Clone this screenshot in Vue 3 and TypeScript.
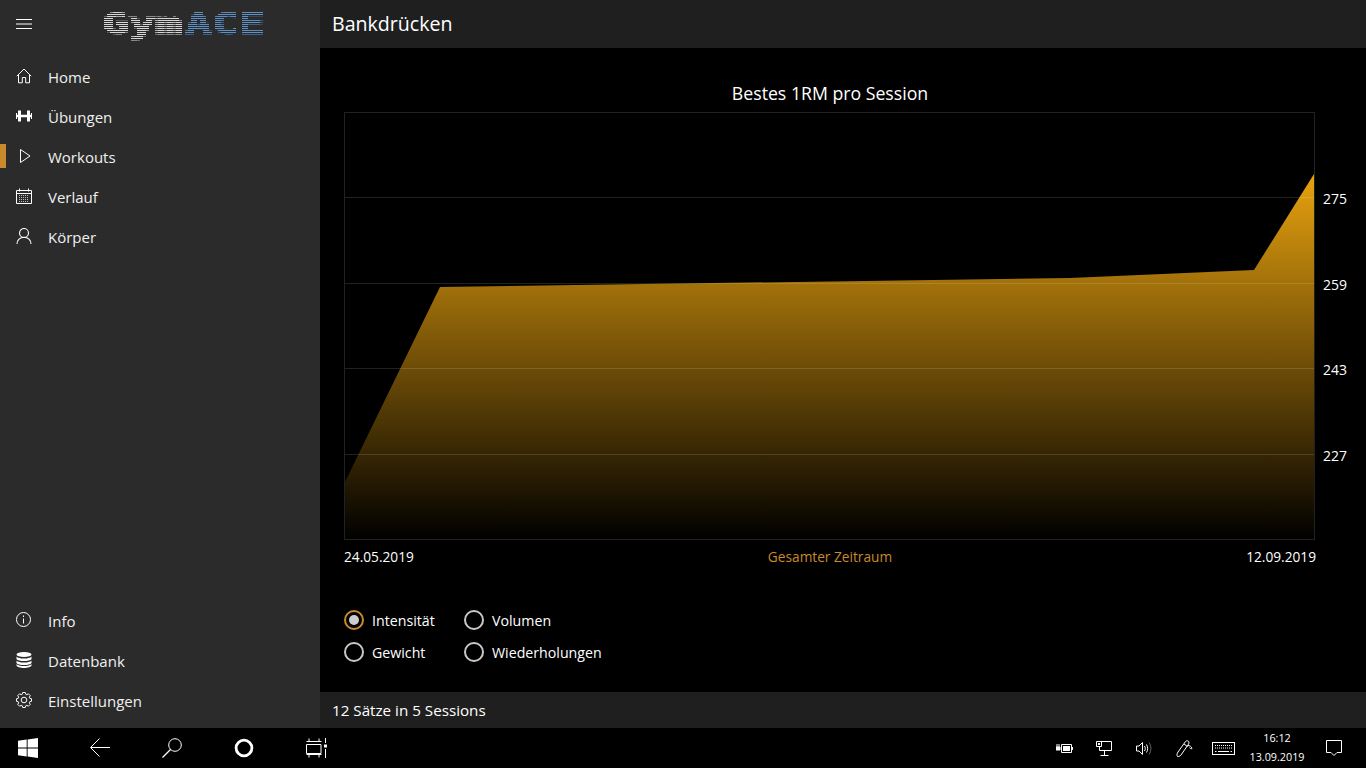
<script setup lang="ts">
const topNav = [
  { label: 'Home', icon: 'home' },
  { label: 'Übungen', icon: 'dumbbell' },
  { label: 'Workouts', icon: 'play', active: true },
  { label: 'Verlauf', icon: 'calendar' },
  { label: 'Körper', icon: 'person' }
]

const bottomNav = [
  { label: 'Info', icon: 'info' },
  { label: 'Datenbank', icon: 'database' },
  { label: 'Einstellungen', icon: 'gear' }
]

const gridLines = [
  { y: 197.5, label: '275' },
  { y: 283.5, label: '259' },
  { y: 368.5, label: '243' },
  { y: 454.5, label: '227' }
]

const areaPoints = '344,484 440,287 1070,278 1254,270 1314,174 1314,540 344,540'

const radios = [
  { label: 'Intensität', checked: true },
  { label: 'Volumen' },
  { label: 'Gewicht' },
  { label: 'Wiederholungen' }
]

// outline of the settings cog, 8 teeth
function gearPath(): string {
  const pts: string[] = []
  for (let i = 0; i < 8; i++) {
    const a = (i * Math.PI) / 4
    for (const [r, d] of [[6, -0.3], [7.6, -0.17], [7.6, 0.17], [6, 0.3]]) {
      pts.push(`${(8 + r * Math.sin(a + d)).toFixed(2)} ${(8 - r * Math.cos(a + d)).toFixed(2)}`)
    }
  }
  return 'M' + pts.join('L') + 'Z'
}
const gear = gearPath()
</script>

<template>
  <div class="screen">
    <div class="app">
      <aside class="sidebar">
        <div class="side-top">
          <svg class="burger" width="16" height="10" viewBox="0 0 16 10">
            <path d="M0 .5h16M0 5h16M0 9.500h16" stroke="#fff" fill="none" />
          </svg>
          <svg class="logo" width="166" height="40" viewBox="0 0 166 40">
            <defs>
              <!-- samples the text on a small grid so the letters turn into stepped line rows -->
              <filter id="blocks" x="0" y="0" width="166" height="40" filterUnits="userSpaceOnUse" primitiveUnits="userSpaceOnUse" color-interpolation-filters="sRGB">
                <feFlood x="1" y="0" width="1" height="1" flood-color="#fff" />
                <feComposite width="3" height="2" />
                <feTile result="grid" />
                <feComposite in="SourceGraphic" in2="grid" operator="in" />
                <feMorphology operator="dilate" radius="1 0" />
              </filter>
            </defs>
            <g filter="url(#blocks)">
              <text class="logo-text" x="1" y="28" textLength="80" lengthAdjust="spacingAndGlyphs" fill="#d8d8d8" stroke="#d8d8d8">Gym</text>
              <text class="logo-text" x="84" y="28" textLength="80" lengthAdjust="spacingAndGlyphs" fill="#5b90c8" stroke="#5b90c8">ACE</text>
            </g>
          </svg>
        </div>

        <nav class="nav">
          <div v-for="item in topNav" :key="item.label" class="nav-item" :class="{ active: item.active }">
            <span class="nav-icon">
              <svg v-if="item.icon === 'home'" width="16" height="16" viewBox="0 0 16 16" fill="none" stroke="#fff">
                <path d="M.8 8.200 8 1l7.200 7.200M2.500 6.500v8.300h3.800V9.500h3.400v5.300h3.800V6.500" />
              </svg>
              <svg v-else-if="item.icon === 'dumbbell'" width="16" height="12" viewBox="0 0 16 12" fill="#fff">
                <path d="M0 3h1v6H0zM2 .5h3v11H2zM5 4.700h6v2.600H5zM11 .5h3v11h-3zM15 3h1v6h-1zM1 4.700h1v2.600H1zM14 4.700h1v2.600h-1z" />
              </svg>
              <svg v-else-if="item.icon === 'play'" width="16" height="16" viewBox="0 0 16 16" fill="none" stroke="#fff">
                <path d="M4.500 1.500v13l9.500-6.500z" />
              </svg>
              <svg v-else-if="item.icon === 'calendar'" width="16" height="16" viewBox="0 0 16 16" fill="none" stroke="#fff">
                <path d="M.5 2.500h15v13H.5zM.5 5.500h15M3.500 .5v3M12.500 .5v3" />
                <path d="M3 7.500h10M3 9.500h10M3 11.500h10M3 13.500h10" stroke-dasharray="1 1" stroke="#bbb" />
              </svg>
              <svg v-else-if="item.icon === 'person'" width="16" height="16" viewBox="0 0 16 16" fill="none" stroke="#fff" stroke-width="1.100">
                <circle cx="8" cy="5" r="4.500" />
                <path d="M1 16c0-4 3-6.800 7-6.800s7 2.800 7 6.800" />
              </svg>
            </span>
            <span class="nav-label">{{ item.label }}</span>
          </div>
        </nav>

        <nav class="nav nav-bottom">
          <div v-for="item in bottomNav" :key="item.label" class="nav-item">
            <span class="nav-icon">
              <svg v-if="item.icon === 'info'" width="16" height="16" viewBox="0 0 16 16" fill="none" stroke="#fff">
                <circle cx="7.500" cy="7.500" r="7" />
                <path d="M7.500 6.500v5M7.500 3.500v1.500" />
              </svg>
              <svg v-else-if="item.icon === 'database'" width="16" height="16" viewBox="0 0 16 16" fill="#fff">
                <ellipse cx="8" cy="2.500" rx="7.500" ry="2.500" />
                <path d="M.5 4.500c1 1.500 4 2 7.500 2s6.500-.5 7.500-2v2.500c-1 1.500-4 2-7.500 2s-6.500-.5-7.500-2zM.5 8.500c1 1.500 4 2 7.500 2s6.500-.5 7.500-2V11c-1 1.500-4 2-7.500 2S1.500 12.500.5 11zM.5 12c1 1.500 4 2 7.500 2s6.500-.5 7.500-2v1.500C15 15 11.500 16 8 16s-7-1-7.500-2.500z" />
              </svg>
              <svg v-else-if="item.icon === 'gear'" width="16" height="16" viewBox="0 0 16 16" fill="none" stroke="#fff">
                <circle cx="8" cy="8" r="2.800" />
                <path :d="gear" />
              </svg>
            </span>
            <span class="nav-label">{{ item.label }}</span>
          </div>
        </nav>
      </aside>

      <main class="main">
        <header class="header">Bankdrücken</header>

        <section class="content">
          <div class="chart-title">Bestes 1RM pro Session</div>
          <svg class="chart" width="1022" height="430" viewBox="344 111 1022 430">
            <defs>
              <linearGradient id="area" gradientUnits="userSpaceOnUse" x1="0" y1="174" x2="0" y2="540">
                <stop offset="0" stop-color="#e8a20f" />
                <stop offset="1" stop-color="#000" />
              </linearGradient>
            </defs>
            <polygon :points="areaPoints" fill="url(#area)" />
            <rect x="344.500" y="112.500" width="970" height="427" fill="none" stroke="#222" />
            <line v-for="g in gridLines" :key="g.y" x1="345" x2="1314" :y1="g.y" :y2="g.y" stroke="#fff" stroke-opacity="0.13" />
            <text v-for="g in gridLines" :key="g.label" class="axis-label" x="1323" :y="g.y + 6">{{ g.label }}</text>
          </svg>

          <div class="range-row">
            <span>24.05.2019</span>
            <span class="range-name">Gesamter Zeitraum</span>
            <span>12.09.2019</span>
          </div>

          <div class="radios">
            <label v-for="r in radios" :key="r.label" class="radio">
              <span class="radio-mark" :class="{ checked: r.checked }"></span>
              {{ r.label }}
            </label>
          </div>
        </section>

        <footer class="status">12 Sätze in 5 Sessions</footer>
      </main>
    </div>

    <div class="taskbar">
      <div class="task-left">
        <svg class="t-win" width="20" height="20" viewBox="0 0 20 20" fill="#fff">
          <path d="M0 2.800 8.700 1.600v7.900H0zM9.600 1.400 20 0v9.500H9.600zM0 10.500h8.700v7.900L0 17.200zM9.600 10.500H20V20L9.600 18.600z" />
        </svg>
        <svg class="t-back" width="20" height="20" viewBox="0 0 20 20" fill="none" stroke="#fff">
          <path d="M20 9.500H.8M9.500 .5l-9 9 9 9" />
        </svg>
        <svg class="t-search" width="20" height="20" viewBox="0 0 20 20" fill="none" stroke="#fff">
          <circle cx="13" cy="7" r="6.300" />
          <path d="M8.500 11.500.5 19.500" stroke-width="1.200" />
        </svg>
        <svg class="t-ring" width="20" height="20" viewBox="0 0 20 20" fill="none" stroke="#fff">
          <circle cx="10" cy="10" r="7.900" stroke-width="2.800" />
        </svg>
        <svg class="t-tasks" width="21" height="20" viewBox="0 0 21 20" fill="none" stroke="#fff">
          <path d="M3 .5v3M13 .5v3M.5 3.500h15M.5 6.500h14.500v9H.5zM.5 16.500h15M3 16.500V19.500M13 16.500V19.500M19.500 0v5M19.500 11v9" />
          <rect x="18" y="6.500" width="3" height="3" fill="#fff" stroke="none" />
        </svg>
      </div>

      <div class="task-right">
        <svg class="tray-battery" width="17" height="12" viewBox="0 0 17 12" fill="none" stroke="#fff">
          <path d="M5.500 2.500h10v8h-10z" />
          <path d="M7 4h7v5H7zM16 5h1v3h-1z" fill="#fff" stroke="none" />
          <path d="M0 5h4v3H0zM1 2v3M3 2v3" stroke-width="1" fill="#fff" />
        </svg>
        <svg class="tray-net" width="16" height="15" viewBox="0 0 16 15" fill="none" stroke="#fff">
          <path d="M3.500 .5h12v9h-12M.5 .5h5v5h-5zM3.500 5.500v4M8.500 9.500v4.500M4.500 14.500h8" />
          <rect x="2" y="2" width="2" height="2" fill="#fff" stroke="none" />
        </svg>
        <svg class="tray-vol" width="16" height="15" viewBox="0 0 16 15" fill="none" stroke="#fff">
          <path d="M.5 5h2.500l3.500-3.500v12L3 10H.5z" />
          <path d="M8.500 5c1 1.500 1 3.500 0 5M10.500 3.500c1.500 2.500 1.500 5.500 0 8" />
          <path d="M13 1.500c2.500 3.500 2.500 8.500 0 12" stroke="#666" />
        </svg>
        <svg class="tray-pen" width="17" height="17" viewBox="0 0 17 17" fill="none" stroke="#fff">
          <path d="M1.500 16.500C.5 15 1 13.500 2 12L9.500 1.500c1-1.200 2.800-.8 3.300.3.400 1 .2 1.600-.3 2.400L5 15c-1 1.200-2.500 1.800-3.500 1.500z" />
          <path d="M8 4l3.500 2.500M12 5.500c1.500 0 3.500.8 4 3-.8.500-1.800 0-2.500-.8" />
        </svg>
        <svg class="tray-keys" width="23" height="13" viewBox="0 0 23 13" fill="none" stroke="#fff">
          <rect x=".5" y=".5" width="22" height="12" />
          <path d="M3 3.500h17M3 6h17" stroke-dasharray="1 1" />
          <path d="M6 9.500h11M3 9.500h1.500M18.500 9.500H20" />
        </svg>
        <div class="clock">
          <span>16:12</span>
          <span>13.09.2019</span>
        </div>
        <svg class="tray-note" width="16" height="16" viewBox="0 0 16 16" fill="none" stroke="#fff">
          <path d="M.5 .5h15v12h-4.500l-3 3-3-3H.5z" />
        </svg>
      </div>
    </div>
  </div>
</template>

<style>
html,
body {
  margin: 0;
  background: #000;
}
</style>

<style scoped>
.screen {
  width: 1366px;
  height: 768px;
  display: flex;
  flex-direction: column;
  overflow: hidden;
  background: #000;
  color: #fff;
  font-family: "Open Sans", "Noto Sans", sans-serif;
}

.app {
  flex: 1;
  display: flex;
  min-height: 0;
}

.sidebar {
  width: 320px;
  display: flex;
  flex-direction: column;
  background: #2b2b2b;
}

.side-top {
  height: 48px;
  display: flex;
  align-items: center;
  padding-left: 16px;
  gap: 69px;
}

.burger {
  display: block;
}

.logo {
  display: block;
  align-self: flex-start;
  margin-top: 6px;
}

.logo-text {
  font-family: "DejaVu Sans Mono", monospace;
  font-weight: 700;
  font-size: 30px;
  stroke-width: 1;
}

.nav {
  padding-top: 8px;
}

.nav-bottom {
  margin-top: auto;
  padding: 0 0 8px;
}

.nav-item {
  height: 40px;
  display: flex;
  align-items: center;
  position: relative;
  font-size: 15px;
  color: #f0f0f0;
}

.nav-label {
  padding-top: 2px;
}

.nav-item.active::before {
  content: "";
  position: absolute;
  left: 0;
  top: 8px;
  width: 6px;
  height: 24px;
  background: #c98a2c;
}

.nav-icon {
  width: 48px;
  padding-left: 16px;
  box-sizing: border-box;
  display: flex;
  align-items: center;
}

.main {
  flex: 1;
  display: flex;
  flex-direction: column;
  min-width: 0;
}

.header {
  height: 48px;
  line-height: 48px;
  padding-left: 12px;
  background: #1f1f1f;
  font-size: 19.600px;
}

.content {
  flex: 1;
  padding-left: 24px;
  font-size: 13.700px;
}

.chart-title {
  width: 972px;
  margin-top: 32px;
  height: 31px;
  line-height: 27px;
  text-align: center;
  font-size: 17.700px;
}

.chart {
  display: block;
}

.axis-label {
  fill: #fff;
  font-size: 14px;
}

.range-row {
  width: 972px;
  margin-top: 6px;
  display: flex;
  justify-content: space-between;
}

.range-name {
  color: #c98a2c;
}

.radios {
  margin-top: 44px;
  display: grid;
  grid-template-columns: 120px 1fr;
  row-gap: 12px;
  font-size: 14.200px;
}

.radio {
  display: flex;
  align-items: center;
  gap: 8px;
  height: 20px;
}

.radio-mark {
  width: 20px;
  height: 20px;
  box-sizing: border-box;
  border: 2px solid #c8c8c8;
  border-radius: 50%;
  display: flex;
  align-items: center;
  justify-content: center;
}

.radio-mark.checked {
  border-color: #c98a2c;
}

.radio-mark.checked::after {
  content: "";
  width: 10px;
  height: 10px;
  border-radius: 50%;
  background: #ccc;
}

.status {
  height: 36px;
  line-height: 36px;
  padding-left: 12px;
  background: #1f1f1f;
  font-size: 15.200px;
}

.taskbar {
  height: 40px;
  display: flex;
  justify-content: space-between;
  align-items: center;
  background: #000;
}

.task-left {
  display: flex;
  align-items: center;
  padding-left: 18px;
}

.t-win,
.t-back,
.t-search,
.t-ring {
  margin-right: 52px;
}

.task-right {
  display: flex;
  align-items: center;
  padding-right: 24px;
}

.tray-battery {
  margin-right: 23px;
}

.tray-net,
.tray-vol {
  margin-right: 24px;
}

.tray-pen {
  margin-right: 19px;
}

.clock {
  width: 68px;
  margin: 0 15px 2px 8px;
  display: flex;
  flex-direction: column;
  align-items: center;
  gap: 3px;
  font-size: 10.800px;
  line-height: 16px;
}
</style>
